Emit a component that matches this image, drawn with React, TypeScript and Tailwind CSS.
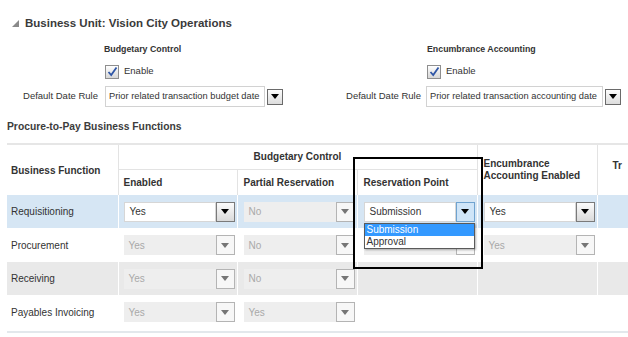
import React from "react";

type Kind = "active" | "disabled" | "focus";

const Tri = ({ color = "#000" }: { color?: string }) => (
  <svg width="8" height="5" viewBox="0 0 8 5">
    <path d="M0 0h8L4 5z" fill={color} />
  </svg>
);

const Check = () => (
  <div className="w-[14px] h-[14px] border border-[#8e8e8e] bg-gradient-to-b from-[#ffffff] to-[#d6d6d6] flex items-center justify-center">
    <svg width="11" height="11" viewBox="0 0 11 11">
      <path d="M1.5 6 L4.2 9 L9.5 1.5" fill="none" stroke="#2f56a6" strokeWidth="1.8" />
    </svg>
  </div>
);

// select box used in table rows
const Sel = ({ value, kind }: { value: string; kind: Kind }) => {
  const field =
    kind === "disabled"
      ? "bg-[#eeeeee] text-[#a9a9a9]"
      : "bg-white border border-[#d6d6d6] text-[#333]";
  const btn =
    kind === "active"
      ? "border-[#7a7a7a] bg-gradient-to-b from-[#fbfbfb] to-[#dadada]"
      : kind === "focus"
      ? "border-[#6fa3d0] bg-[#cfe5f8]"
      : "border-[#b4b4b4] bg-[#f7f7f7]";
  return (
    <div className="flex w-[111px] h-[20px]">
      <div className={`flex-1 flex items-center pl-[5px] text-[10px] ${field}`}>{value}</div>
      <div className={`w-[19px] h-[20px] border flex items-center justify-center ${btn}`}>
        <Tri color={kind === "disabled" ? "#767676" : "#000"} />
      </div>
    </div>
  );
};

const DateRule = ({ text, w }: { text: string; w: string }) => (
  <>
    <div className={`${w} h-[21px] border border-[#d2d2d2] bg-white flex items-center pl-[3px] text-[9.3px] text-[#333] whitespace-nowrap`}>
      {text}
    </div>
    <div className="ml-[2px] w-[16px] h-[16px] border border-[#6a6a6a] bg-gradient-to-b from-[#fcfcfc] to-[#dddddd] flex items-center justify-center">
      <Tri />
    </div>
  </>
);

const rows: { name: string; bg: string; enabled: Kind; partial: string; res?: Kind; enc?: Kind }[] = [
  { name: "Requisitioning", bg: "bg-[#d6e6f4]", enabled: "active", partial: "No", res: "focus", enc: "active" },
  { name: "Procurement", bg: "bg-white", enabled: "disabled", partial: "No", res: "disabled", enc: "disabled" },
  { name: "Receiving", bg: "bg-[#e9e9e9]", enabled: "disabled", partial: "No" },
  { name: "Payables Invoicing", bg: "bg-white", enabled: "disabled", partial: "Yes" },
];

const rowH = ["h-[33px]", "h-[34px]", "h-[33px]", "h-[34px]"];

export default function App() {
  return (
    <div className="w-[628px] h-[337px] overflow-hidden bg-white text-[#333] font-['Liberation_Sans',Arial,sans-serif]">
      <div className="pt-[15px] pl-[12px] flex items-center h-[31px]">
        <svg width="7" height="7" viewBox="0 0 7 7" className="mt-[1px]">
          <path d="M7 0V7H0z" fill="#8a8a8a" />
        </svg>
        <span className="ml-[6px] text-[11.5px] font-bold leading-[16px] text-[#3a3a3a]">
          Business Unit: Vision City Operations
        </span>
      </div>

      <div className="flex mt-[12px]">
        <div className="w-[283px]">
          <div className="pl-[104px] h-[12px] leading-[12px] text-[8.8px] font-bold">Budgetary Control</div>
          <div className="pl-[105px] mt-[9px] h-[15px] flex items-center gap-[5px]">
            <Check />
            <span className="text-[9.5px]">Enable</span>
          </div>
          <div className="mt-[7px] h-[21px] flex items-center">
            <span className="w-[98px] text-right text-[9.5px]">Default Date Rule</span>
            <div className="ml-[7px] flex items-center">
              <DateRule text="Prior related transaction budget date" w="w-[160px]" />
            </div>
          </div>
        </div>
        <div className="ml-[7px]">
          <div className="pl-[137px] h-[12px] leading-[12px] text-[8.8px] font-bold">Encumbrance Accounting</div>
          <div className="pl-[137px] mt-[9px] h-[15px] flex items-center gap-[5px]">
            <Check />
            <span className="text-[9.5px]">Enable</span>
          </div>
          <div className="mt-[7px] h-[21px] flex items-center">
            <span className="w-[131px] text-right text-[9.5px]">Default Date Rule</span>
            <div className="ml-[5px] flex items-center">
              <DateRule text="Prior related transaction accounting date" w="w-[177px]" />
            </div>
          </div>
        </div>
      </div>

      <div className="mt-[13px] pl-[7px] h-[14px] leading-[14px] text-[10.3px] font-bold text-[#3c3c3c]">
        Procure-to-Pay Business Functions
      </div>

      <div className="relative mt-[9px] ml-[7px] w-[621px] border-t-2 border-[#e6e6e6]">
        <table className="table-fixed border-collapse w-[621px] text-[10px]">
          <colgroup>
            <col className="w-[111px]" />
            <col className="w-[119px]" />
            <col className="w-[120px]" />
            <col className="w-[120px]" />
            <col className="w-[120px]" />
            <col className="w-[31px]" />
          </colgroup>
          <thead>
            <tr className="h-[24px]">
              <th rowSpan={2} className="border-r border-[#e3e3e3] text-left pl-[4px] font-bold text-[10px] align-middle">
                Business Function
              </th>
              <th colSpan={3} className="border-b border-r border-[#e3e3e3] text-center font-bold text-[10px]">
                Budgetary Control
              </th>
              <th rowSpan={2} className="border-r border-[#e3e3e3] text-left pl-[6px] font-bold text-[10px] leading-[12px] align-middle">
                Encumbrance Accounting Enabled
              </th>
              <th rowSpan={2} className="text-left pl-[15px] font-bold text-[10px] align-middle overflow-hidden whitespace-nowrap">
                <div className="-mt-[10px]">Tr</div>
              </th>
            </tr>
            <tr className="h-[26px]">
              <th className="border-r border-[#e3e3e3] text-left pl-[5px] font-bold text-[10px]">Enabled</th>
              <th className="border-r border-[#e3e3e3] text-left pl-[6px] font-bold text-[10px]">Partial Reservation</th>
              <th className="border-r border-[#e3e3e3] text-left pl-[6px] font-bold text-[10px]">Reservation Point</th>
            </tr>
          </thead>
          <tbody>
            {rows.map((r, i) => (
              <tr key={r.name} className={`${r.bg} ${rowH[i]}`}>
                <td className="pl-[4px] border-r border-white">{r.name}</td>
                <td className="pl-[5px] border-r border-white">
                  <Sel value="Yes" kind={r.enabled} />
                </td>
                <td className="pl-[6px] border-r border-white">
                  <Sel value={r.partial} kind="disabled" />
                </td>
                <td className="pl-[6px] border-r border-white">
                  {r.res && (
                    <div className="relative">
                      <Sel value={r.res === "focus" ? "Submission" : ""} kind={r.res} />
                      {r.res === "focus" && (
                        <div className="absolute z-20 left-0 top-[21px] w-[111px] border border-[#5a5a5a] bg-white shadow-[1px_1px_2px_rgba(0,0,0,0.3)] text-[10px] leading-[12px]">
                          <div className="bg-[#3399ff] text-white pl-[2px]">Submission</div>
                          <div className="pl-[2px] text-[#333]">Approval</div>
                        </div>
                      )}
                    </div>
                  )}
                </td>
                <td className="pl-[6px] border-r border-white">
                  {r.enc && <Sel value="Yes" kind={r.enc} />}
                </td>
                <td />
              </tr>
            ))}
          </tbody>
        </table>
        <div className="h-[2px] mt-[2px] bg-[#e3e8ec]" />
        <div className="absolute z-10 left-[346px] top-[12px] w-[130px] h-[112px] border-2 border-black pointer-events-none" />
      </div>
    </div>
  );
}
